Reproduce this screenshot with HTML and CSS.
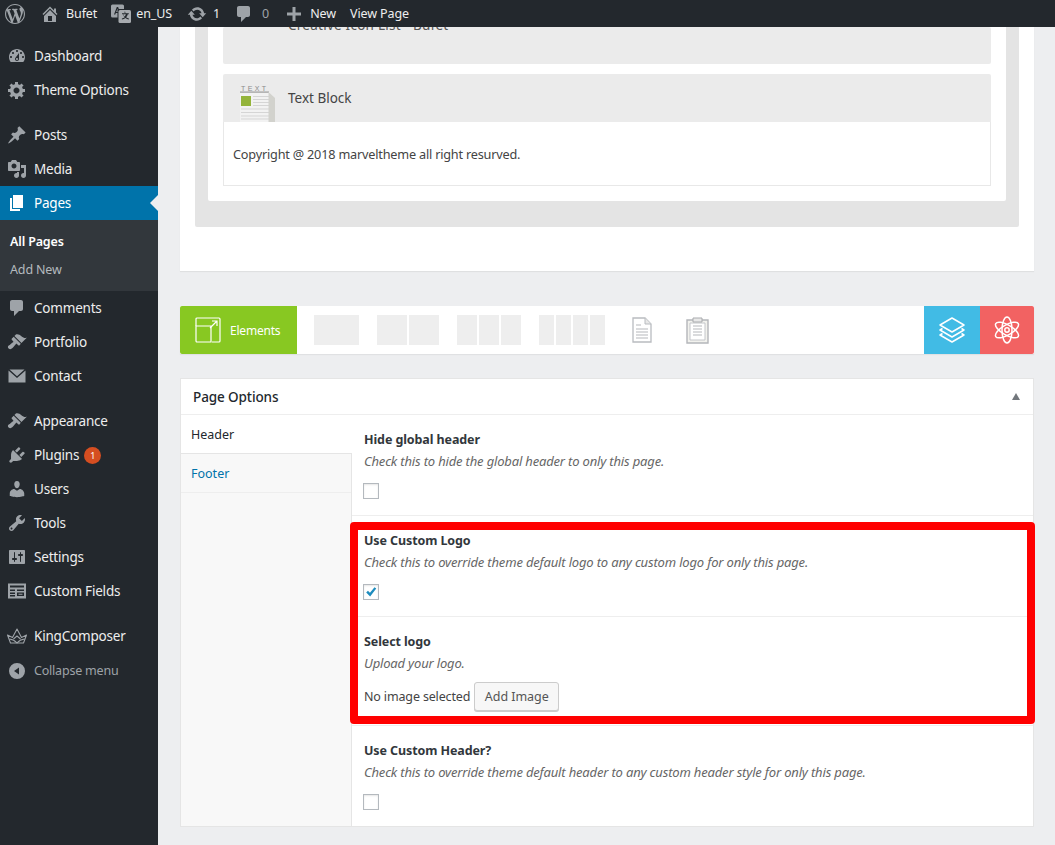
FILE: index.html
```html
<!DOCTYPE html>
<html lang="en">
<head>
<meta charset="utf-8">
<title>Edit Page</title>
<link rel="stylesheet" href="styles.css">
</head>
<body>
<svg class="defs" width="0" height="0" aria-hidden="true">
  <symbol id="i-wp" viewBox="0 0 20 20"><path fill-rule="evenodd" d="M20 10c0-5.51-4.49-10-10-10C4.48 0 0 4.49 0 10c0 5.52 4.48 10 10 10 5.51 0 10-4.48 10-10zM7.78 15.37L4.37 6.22c.55-.02 1.17-.08 1.17-.08.5-.06.44-1.13-.06-1.11 0 0-1.45.11-2.37.11-.18 0-.37 0-.58-.01C4.12 2.69 6.87 1.11 10 1.11c2.33 0 4.45.87 6.05 2.34-.68-.11-1.65.39-1.65 1.58 0 .74.45 1.36.9 2.1.35.61.55 1.36.55 2.46 0 1.49-1.4 5-1.4 5l-3.03-8.37c.54-.02.82-.17.82-.17.5-.05.44-1.25-.06-1.22 0 0-1.44.12-2.38.12-.87 0-2.33-.12-2.33-.12-.5-.03-.56 1.2-.06 1.22l.92.08 1.26 3.41zM17.41 10c.24-.64.74-1.87.43-4.25.7 1.29 1.05 2.71 1.05 4.25 0 3.29-1.73 6.24-4.4 7.78.97-2.59 1.94-5.2 2.92-7.78zM6.1 18.09C3.12 16.65 1.11 13.53 1.11 10c0-1.3.23-2.48.72-3.59C3.25 10.3 4.67 14.2 6.1 18.09zm4.03-6.63l2.58 6.98c-.86.29-1.76.45-2.71.45-.79 0-1.57-.11-2.29-.33.81-2.38 1.62-4.74 2.42-7.1z"/></symbol>
  <symbol id="i-home" viewBox="0 0 20 20"><path fill-rule="evenodd" d="M16 8.5l1.53 1.53-1.06 1.06L10 4.62l-6.47 6.47-1.06-1.06L10 2.5l4 4v-2h2v4zm-6-2.46l6 5.99V18H4v-5.97zM12 17v-5H8v5h4z"/></symbol>
  <symbol id="i-update" viewBox="0 0 20 20"><path d="M10.2 3.28c3.53 0 6.43 2.61 6.92 6h2.08l-3.5 4-3.5-4h2.32c-.45-1.97-2.21-3.45-4.32-3.45-1.45 0-2.73.71-3.54 1.78L4.95 5.66C6.23 4.2 8.11 3.28 10.2 3.28zm-.4 13.44c-3.52 0-6.43-2.61-6.92-6H.8l3.5-4c1.17 1.33 2.33 2.67 3.5 4H5.48c.45 1.97 2.21 3.45 4.32 3.45 1.45 0 2.73-.71 3.54-1.78l1.71 1.95c-1.28 1.46-3.15 2.38-5.25 2.38z"/></symbol>
  <symbol id="i-comment" viewBox="0 0 20 20"><path d="M5 2h9c1.1 0 2 .9 2 2v7c0 1.1-.9 2-2 2h-2l-5 5v-5H5c-1.1 0-2-.9-2-2V4c0-1.1.9-2 2-2z"/></symbol>
  <symbol id="i-plus" viewBox="0 0 20 20"><path d="M17 8.500v3h-5.500V17h-3v-5.500H3v-3h5.500V3h3v5.500z"/></symbol>
  <symbol id="i-dash" viewBox="0 0 20 20"><path fill-rule="evenodd" d="M3.76 16h12.48c1.1-1.37 1.76-3.11 1.76-5 0-4.42-3.58-8-8-8s-8 3.58-8 8c0 1.89.66 3.63 1.76 5zM10 4c.55 0 1 .45 1 1s-.45 1-1 1-1-.45-1-1 .45-1 1-1zM6 6c.55 0 1 .45 1 1s-.45 1-1 1-1-.45-1-1 .45-1 1-1zm8 0c.55 0 1 .45 1 1s-.45 1-1 1-1-.45-1-1 .45-1 1-1zm-5.37 5.55L12 7v6c0 1.1-.9 2-2 2s-2-.9-2-2c0-.57.24-1.08.63-1.45zM4 10c.55 0 1 .45 1 1s-.45 1-1 1-1-.45-1-1 .45-1 1-1zm12 0c.55 0 1 .45 1 1s-.45 1-1 1-1-.45-1-1 .45-1 1-1zm-5 3c0-.55-.45-1-1-1s-1 .45-1 1 .45 1 1 1 1-.45 1-1z"/></symbol>
  <symbol id="i-gear" viewBox="0 0 20 20"><path fill-rule="evenodd" d="M18 12h-2.18c-.17.7-.44 1.35-.81 1.93l1.54 1.54-2.1 2.1-1.54-1.54c-.58.36-1.23.63-1.91.79V19H8v-2.18c-.68-.16-1.33-.43-1.91-.79l-1.54 1.54-2.12-2.12 1.54-1.54c-.36-.58-.63-1.23-.79-1.91H1V9.03h2.17c.16-.7.44-1.35.8-1.94L2.43 5.55l2.1-2.1 1.54 1.54c.58-.37 1.24-.64 1.93-.81V2h3v2.18c.68.16 1.33.43 1.91.79l1.54-1.54 2.12 2.12-1.54 1.54c.36.59.64 1.24.8 1.94H18V12zm-8.5 1.5c1.66 0 3-1.34 3-3s-1.34-3-3-3-3 1.34-3 3 1.34 3 3 3z"/></symbol>
  <symbol id="i-pin" viewBox="0 0 20 20"><path d="M10.44 3.02l1.82-1.82 6.36 6.35-1.83 1.82c-1.05-.68-2.48-.57-3.41.36l-.75.75c-.92.93-1.04 2.35-.35 3.41l-1.83 1.82-2.41-2.41-2.8 2.79c-.42.42-3.38 2.71-3.8 2.29s1.86-3.39 2.28-3.81l2.79-2.79L4.1 9.36l1.83-1.82c1.05.69 2.48.57 3.4-.36l.75-.75c.93-.92 1.05-2.35.36-3.41z"/></symbol>
  <symbol id="i-media" viewBox="0 0 20 20"><path fill-rule="evenodd" d="M13 11V4c0-.55-.45-1-1-1h-1.67L9 1H5L3.67 3H2c-.55 0-1 .45-1 1v7c0 .55.45 1 1 1h10c.55 0 1-.45 1-1zM7 4.5c1.38 0 2.5 1.12 2.5 2.5S8.38 9.5 7 9.5 4.5 8.38 4.5 7 5.62 4.5 7 4.5zM14 6h5v10.5c0 1.38-1.12 2.5-2.5 2.5S14 17.88 14 16.5s1.12-2.5 2.5-2.5c.17 0 .34.02.5.05V9h-3V6zm-4 8.05V13h2v3.5c0 1.38-1.12 2.5-2.5 2.5S7 17.88 7 16.5 8.12 14 9.5 14c.17 0 .34.02.5.05z"/></symbol>
  <symbol id="i-page" viewBox="0 0 20 20"><path d="M6 15V2h10v13H6zm-1 1h8v2H3V5h2v11z"/></symbol>
  <symbol id="i-brush" viewBox="0 0 20 20"><path d="M14.48 11.06L7.41 3.99l1.5-1.5c.5-.56 2.3-.47 3.51.32 1.21.8 1.43 1.28 2.91 2.1 1.18.64 2.45 1.26 4.45.85zm-.71.71L6.7 4.7 4.93 6.47c-.39.39-.39 1.02 0 1.41l1.06 1.06c.39.39.39 1.03 0 1.42-.6.6-1.43 1.11-2.21 1.69-.35.26-.7.53-1.01.84C1.43 13.23-.03 14.85 1.62 16.5s3.27.19 4.61-1.15c.31-.31.58-.66.84-1.01.58-.78 1.09-1.61 1.69-2.21.39-.39 1.03-.39 1.42 0l1.06 1.06c.39.39 1.02.39 1.41 0z"/></symbol>
  <symbol id="i-mail" viewBox="0 0 20 20"><path d="M2.500 3.500h15L10 10.200zM1.500 4.500l8.500 7.500 8.500-7.500v12h-17z"/></symbol>
  <symbol id="i-plug" viewBox="0 0 20 20"><path d="M13.11 4.36L9.87 7.6 8 5.73l3.24-3.24c.35-.34 1.05-.2 1.56.32.52.51.66 1.21.31 1.55zm-8 1.77l.91-1.12 9.01 9.01-1.19.84c-.71.71-2.63 1.16-3.82 1.16H6.14L4.9 17.26c-.59.59-1.54.59-2.12 0-.59-.58-.59-1.53 0-2.12l1.24-1.24v-3.88c0-1.13.4-3.19 1.09-3.89zm7.26 3.97l3.24-3.24c.34-.35 1.04-.21 1.55.31.52.51.66 1.21.31 1.55l-3.24 3.25z"/></symbol>
  <symbol id="i-user" viewBox="0 0 20 20"><path d="M10 9.25c-2.27 0-2.73-3.44-2.73-3.44C7 4.02 7.82 2 9.97 2c2.16 0 2.98 2.02 2.71 3.81 0 0-.41 3.44-2.68 3.44zm0 2.57L12.72 10c2.39 0 4.52 2.33 4.52 4.53v2.49s-3.65 1.13-7.24 1.13c-3.65 0-7.24-1.13-7.24-1.13v-2.49c0-2.25 1.94-4.48 4.47-4.48z"/></symbol>
  <symbol id="i-tools" viewBox="0 0 20 20"><path fill-rule="evenodd" d="M16.68 9.77c-1.34 1.34-3.3 1.67-4.95.99l-5.41 6.52c-.99.99-2.59.99-3.58 0s-.99-2.59 0-3.57l6.52-5.42c-.68-1.65-.35-3.61.99-4.95 1.28-1.28 3.12-1.62 4.72-1.06l-2.89 2.89 2.82 2.82 2.86-2.87c.53 1.58.18 3.39-1.08 4.65zM3.81 16.21c.4.39 1.04.39 1.43 0 .4-.4.4-1.04 0-1.43-.39-.4-1.03-.4-1.43 0-.39.39-.39 1.03 0 1.43z"/></symbol>
  <symbol id="i-settings" viewBox="0 0 20 20"><path fill-rule="evenodd" d="M18 16V4c0-.55-.45-1-1-1H3c-.55 0-1 .45-1 1v12c0 .55.45 1 1 1h14c.55 0 1-.45 1-1zM8 11h1c.55 0 1 .45 1 1s-.45 1-1 1H8v1.5c0 .28-.22.5-.5.5s-.5-.22-.5-.5V13H6c-.55 0-1-.45-1-1s.45-1 1-1h1V5.5c0-.28.22-.5.5-.5s.5.22.5.5V11zm5-2h-1c-.55 0-1-.45-1-1s.45-1 1-1h1V5.500c0-.28.22-.5.5-.5s.5.22.5.5V7h1c.55 0 1 .45 1 1s-.45 1-1 1h-1v5.500c0 .28-.22.5-.5.5s-.5-.22-.5-.5V9z"/></symbol>
  <symbol id="i-fields" viewBox="0 0 20 20"><path fill-rule="evenodd" d="M1 2.500h18v15H1zM3 4.500v2h14v-2zM3 8.500v1.500h5V8.500zm7 0v1.500h7V8.500zM3 11.500V13h5v-1.500zm7 0v3.500h7v-3.500zm1.500 1.200h4v1.100h-4zM3 14v1.500h5V14z"/></symbol>
  <symbol id="i-crown" viewBox="0 0 20 20"><g fill="none" stroke="currentColor" stroke-width="1.100" stroke-linejoin="round"><path d="M.5 9l5 2.500L10 3l4.500 8.500 5-2.500-3 8h-13z"/><path d="M2.500 13c3.200.4 5.500 1.700 7.500 4 2-2.300 4.300-3.600 7.500-4M6.500 13l3.500-3 3.500 3"/></g></symbol>
  <symbol id="i-collapse" viewBox="0 0 20 20"><path fill-rule="evenodd" d="M10 2a8 8 0 1 1 0 16 8 8 0 0 1 0-16zm2 4.500L7 10l5 3.500z"/></symbol>
</svg>

<header class="adminbar">
  <svg class="bar-ico logo"><use href="#i-wp"/></svg>
  <a class="bar-item"><svg class="bar-ico"><use href="#i-home"/></svg><span class="bar-text">Bufet</span></a>
  <a class="bar-item lang">
    <svg class="bar-ico" viewBox="0 0 20 20"><rect x="0" y=".5" width="13" height="13" rx="1.500" fill="#9ea3a8"/><path d="M3 10.500L5.800 3h1.300l2.700 7.500H8.500L8 9H4.800l-.5 1.500zM5.200 7.900h2.400L6.400 4.700z" fill="#23282d"/><rect x="6.500" y="5" width="14" height="14" rx="1.500" fill="#23282d"/><rect x="7.500" y="6" width="12.500" height="13" rx="1.500" fill="#a7abaf"/><path d="M13.200 7.700h1.100v1.500h3.500v1h-1c-.3 1.300-.9 2.300-1.700 3.100.8.600 1.700 1 2.800 1.200v1c-1.400-.3-2.500-.8-3.500-1.500-.9.700-2 1.200-3.500 1.500v-1c1.100-.2 2-.6 2.800-1.200-.8-.8-1.400-1.800-1.700-3.100h-1v-1h3zm-.9 2.500c.3.900.7 1.700 1.300 2.400.6-.7 1-1.500 1.300-2.400z" fill="#23282d"/></svg>
    <span class="bar-text">en_US</span>
  </a>
  <a class="bar-item"><svg class="bar-ico"><use href="#i-update"/></svg><span class="bar-text">1</span></a>
  <a class="bar-item comments"><svg class="bar-ico"><use href="#i-comment"/></svg><span class="bar-text dim">0</span></a>
  <a class="bar-item"><svg class="bar-ico"><use href="#i-plus"/></svg><span class="bar-text">New</span></a>
  <a class="bar-item"><span class="bar-text">View Page</span></a>
</header>

<div class="layout">
  <nav class="sidebar">
    <ul class="menu">
      <li class="menu-item"><svg class="menu-ico"><use href="#i-dash"/></svg>Dashboard</li>
      <li class="menu-item"><svg class="menu-ico"><use href="#i-gear"/></svg>Theme Options</li>
      <li class="menu-item sep"><svg class="menu-ico"><use href="#i-pin"/></svg>Posts</li>
      <li class="menu-item"><svg class="menu-ico"><use href="#i-media"/></svg>Media</li>
      <li class="menu-item active"><svg class="menu-ico"><use href="#i-page"/></svg>Pages</li>
      <li class="submenu">
        <a class="sub-item current">All Pages</a>
        <a class="sub-item">Add New</a>
      </li>
      <li class="menu-item"><svg class="menu-ico"><use href="#i-comment"/></svg>Comments</li>
      <li class="menu-item"><svg class="menu-ico"><use href="#i-brush"/></svg>Portfolio</li>
      <li class="menu-item"><svg class="menu-ico"><use href="#i-mail"/></svg>Contact</li>
      <li class="menu-item sep"><svg class="menu-ico"><use href="#i-brush"/></svg>Appearance</li>
      <li class="menu-item"><svg class="menu-ico"><use href="#i-plug"/></svg>Plugins<span class="badge">1</span></li>
      <li class="menu-item"><svg class="menu-ico"><use href="#i-user"/></svg>Users</li>
      <li class="menu-item"><svg class="menu-ico"><use href="#i-tools"/></svg>Tools</li>
      <li class="menu-item"><svg class="menu-ico"><use href="#i-settings"/></svg>Settings</li>
      <li class="menu-item"><svg class="menu-ico"><use href="#i-fields"/></svg>Custom Fields</li>
      <li class="menu-item sep"><svg class="menu-ico"><use href="#i-crown"/></svg>KingComposer</li>
      <li class="menu-item collapse"><svg class="menu-ico"><use href="#i-collapse"/></svg>Collapse menu</li>
    </ul>
  </nav>

  <main class="content">
    <section class="builder">
      <div class="row-outer">
        <div class="row-inner">
          <div class="element clipped"><span class="clipped-title">Creative Icon List - Bufet</span></div>
          <div class="element">
            <div class="element-head">
              <svg class="text-ico" viewBox="0 0 36 38">
                <text x="1" y="6.800" class="text-ico-label">TEXT</text>
                <path d="M0 8h30v30H0z" fill="#f2f2f2"/>
                <path d="M0 7.500h29v1.200H0z" fill="#9b9b9b"/>
                <path d="M1 12h10v10H1z" fill="#94b43b"/>
                <path d="M13 12.500h16M13 15.500h16M13 18.500h16M13 21.500h16M1 25h28M1 28.500h28M1 32h28M1 35h28" stroke="#d5d5d5" fill="none"/>
                <path d="M28.500 8l6.500 6v24h-6.500z" fill="#d2d2cd"/>
              </svg>
              <span class="element-title">Text Block</span>
            </div>
            <div class="element-body">Copyright @ 2018 marveltheme all right resurved.</div>
          </div>
        </div>
      </div>
    </section>

    <section class="toolbar">
      <a class="tool-main">
        <svg class="tool-main-ico" viewBox="0 0 26 26" fill="none" stroke="#fff" stroke-width="1.200">
          <path d="M1 9V2a1 1 0 0 1 1-1h22a1 1 0 0 1 1 1v22a1 1 0 0 1-1 1H17"/>
          <path d="M1 9h15v16H2a1 1 0 0 1-1-1z"/>
          <path d="M15 11l7-7M17 4h5v5"/>
        </svg>
        <span class="tool-main-text">Elements</span>
      </a>
      <div class="col-groups">
        <div class="col-group w1"><i></i></div>
        <div class="col-group w2"><i></i><i></i></div>
        <div class="col-group w3"><i></i><i></i><i></i></div>
        <div class="col-group w4"><i></i><i></i><i></i><i></i></div>
        <svg class="tpl-ico doc" viewBox="0 0 20 26"><path d="M1 1h12l6 6v18H1z" fill="#fff" stroke="#b9bcc0" stroke-width="1.300"/><path d="M13 1v6h6" fill="#e8e8e8" stroke="#b9bcc0"/><path d="M4 8h5M4 12h12M4 15h12M4 18h12M4 21h12" stroke="#b5b8bb" stroke-width="1.200"/></svg>
        <svg class="tpl-ico clip" viewBox="0 0 23 27"><path d="M1 3h21v23H1z" fill="#f2f2ee" stroke="#b4b6ba" stroke-width="1.400"/><path d="M4 6h15v17H4z" fill="#fff" stroke="#c4c6ca"/><path d="M7 1h9v4H7z" fill="#e8e8e8" stroke="#a9abae"/><path d="M7 9h9M7 12h9M7 15h9M7 18h9" stroke="#b5b8bb" stroke-width="1.200"/></svg>
      </div>
      <a class="tool-side blue">
        <svg viewBox="0 0 28 28" fill="none" stroke="#fff" stroke-width="1.500" stroke-linejoin="round" class="tool-side-ico"><path d="M14 2l12 7-12 7-12-7z"/><path d="M4.500 12.500L2 14l12 7 12-7-2.500-1.500"/><path d="M4.500 17.500L2 19l12 7 12-7-2.500-1.500"/></svg>
      </a>
      <a class="tool-side red">
        <svg viewBox="0 0 28 28" fill="none" stroke="#fff" stroke-width="1.500" class="tool-side-ico"><ellipse cx="14" cy="14" rx="5" ry="13"/><ellipse cx="14" cy="14" rx="5" ry="13" transform="rotate(60 14 14)"/><ellipse cx="14" cy="14" rx="5" ry="13" transform="rotate(-60 14 14)"/><circle cx="14" cy="14" r="2.200"/></svg>
      </a>
    </section>

    <section class="options">
      <header class="options-head"><h2>Page Options</h2><span class="caret"></span></header>
      <div class="options-body">
        <ul class="tabs">
          <li class="tab on">Header</li>
          <li class="tab">Footer</li>
        </ul>
        <div class="fields">
          <div class="field">
            <div class="field-label">Hide global header</div>
            <div class="field-desc">Check this to hide the global header to only this page.</div>
            <span class="check"></span>
          </div>
          <div class="field">
            <div class="field-label">Use Custom Logo</div>
            <div class="field-desc">Check this to override theme default logo to any custom logo for only this page.</div>
            <span class="check"><svg viewBox="0 0 16 16" class="tick"><path d="M2.500 8.500l2-2 2.300 2.400L12 2.500l2 1.500-7 9z"/></svg></span>
          </div>
          <div class="field tight">
            <div class="field-label">Select logo</div>
            <div class="field-desc">Upload your logo.</div>
            <div class="upload"><span>No image selected</span><button class="btn" type="button">Add Image</button></div>
          </div>
          <div class="field last">
            <div class="field-label">Use Custom Header?</div>
            <div class="field-desc">Check this to override theme default header to any custom header style for only this page.</div>
            <span class="check"></span>
          </div>
        </div>
      </div>
      <div class="highlight"></div>
    </section>
  </main>
</div>
</body>
</html>
```
FILE: styles.css
```css
* { box-sizing: border-box; }
html, body { margin: 0; padding: 0; }
body {
  background: #edeef0;
  color: #444;
  font-family: "Noto Sans", "Open Sans", sans-serif;
  font-size: 13px;
  line-height: 20px;
  overflow: hidden;
  height: 845px;
}
.defs { position: absolute; }
ul { list-style: none; margin: 0; padding: 0; }

/* admin bar */
.adminbar {
  display: flex;
  align-items: center;
  height: 27px;
  background: #23282d;
  color: #eee;
  padding-left: 5px;
}
.bar-ico { width: 20px; height: 20px; fill: #9ea3a8; flex: none; }
.logo { margin-right: 15px; }
.bar-item { display: flex; align-items: center; gap: 6px; margin-right: 14px; }
.bar-item.lang { gap: 5px; margin-right: 15px; }
.bar-item.comments { gap: 8px; margin-right: 15px; }
.bar-text { font-size: 12.500px; letter-spacing: -0.1px; white-space: nowrap; }
.dim { color: #9ea3a8; }

/* sidebar */
.layout { display: flex; height: 818px; }
.sidebar { width: 158px; flex: none; background: #23282d; padding-top: 12px; }
.menu-item {
  position: relative;
  display: flex;
  align-items: center;
  height: 34px;
  padding-left: 7px;
  color: #eee;
  font-size: 13.500px;
  letter-spacing: -0.2px;
}
.menu-item.sep { margin-top: 11px; }
.menu-ico { width: 20px; height: 20px; margin-right: 7px; fill: #9ea3a8; color: #9ea3a8; flex: none; }
.active { background: #0073aa; color: #fff; }
.active .menu-ico { fill: #fff; }
.active::after {
  content: "";
  position: absolute;
  right: 0;
  top: 50%;
  margin-top: -8px;
  border: 8px solid transparent;
  border-right-color: #edeef0;
  border-left-width: 0;
}
.submenu { background: #32373c; padding: 8px 0 7px; height: 71px; }
.sub-item { display: block; height: 28px; line-height: 28px; padding-left: 10px; font-size: 12.500px; letter-spacing: -0.15px; color: #b4b9be; }
.sub-item.current { color: #fff; font-weight: 600; }
.badge {
  width: 17px; height: 17px; border-radius: 50%;
  background: #d54e21; color: #fff; font-size: 9px; line-height: 17px;
  text-align: center; margin-left: 5px; letter-spacing: 0;
}
.collapse { color: #9ea3a8; font-size: 12.500px; padding-top: 1px; }

/* content */
.content { flex: 1; min-width: 0; padding: 0 21px 0 22px; }
.builder { background: #fff; padding: 0 15px 44px; box-shadow: 0 1px 1px rgba(0,0,0,.06); }
.row-outer { background: #e4e4e4; padding: 0 13px 26px; border-radius: 0 0 2px 2px; }
.row-inner { background: #fff; padding: 0 15px 15px; display: flex; flex-direction: column; gap: 10px; border-radius: 0 0 2px 2px; }
.element { border-radius: 2px; }
.clipped { height: 37px; background: #ebebeb; overflow: hidden; padding-left: 65px; }
.clipped-title { display: block; margin-top: -12px; font-size: 13.500px; letter-spacing: .25px; color: #555; }
.element-head { display: flex; align-items: center; height: 48px; background: #ebebeb; padding: 9px 0 0 17px; border-radius: 2px 2px 0 0; }
.text-ico { width: 36px; height: 38px; margin-top: -1px; margin-right: 12px; flex: none; align-self: flex-end; }
.text-ico-label { font-size: 7px; letter-spacing: 2.400px; fill: #8a8a8a; font-family: "Liberation Sans", sans-serif; }
.element-title { font-size: 13.500px; color: #444; margin-top: -9px; }
.element-body { height: 64px; background: #fff; border: 1px solid #e8e8e8; border-top: 0; padding: 22px 9px 0; font-size: 12.700px; letter-spacing: -0.2px; color: #444; }

/* toolbar */
.toolbar { display: flex; height: 48px; margin-top: 35px; background: #fff; box-shadow: 0 1px 1px rgba(0,0,0,.05); }
.tool-main {
  width: 117px; flex: none; background: #88c822; color: #fff;
  display: flex; align-items: center; padding-left: 15px; gap: 9px;
  font-size: 12px; letter-spacing: -0.2px; border-radius: 2px 0 0 2px;
}
.tool-main-ico { width: 26px; height: 26px; flex: none; }
.tool-main-text { padding-top: 1px; }
.col-groups { flex: 1; display: flex; align-items: center; gap: 18px; padding-left: 17px; }
.col-group { display: flex; gap: 2px; height: 30px; }
.col-group i { flex: 1; background: #eee; }
.w1 { width: 45px; } .w2 { width: 62px; } .w3 { width: 64px; } .w4 { width: 66px; }
.tpl-ico { flex: none; }
.doc { width: 20px; height: 26px; margin-left: 9px; }
.clip { width: 23px; height: 27px; margin-left: 16px; }
.tool-side { width: 56px; flex: none; display: flex; align-items: center; justify-content: center; }
.tool-side.red { width: 54px; border-radius: 0 2px 2px 0; }
.blue { background: #41bbe5; }
.red { background: #f26262; }
.tool-side-ico { width: 28px; height: 28px; }

/* options */
.options { position: relative; margin-top: 24px; background: #fff; border: 1px solid #e5e5e5; }
.options-head { display: flex; align-items: center; justify-content: space-between; height: 36px; padding: 0 13px 0 12px; border-bottom: 1px solid #eee; }
.options-head h2 { margin: 0; font-size: 13.500px; font-weight: 500; color: #23282d; letter-spacing: -0.1px; }
.caret { border: 5px solid transparent; border-top: 0; border-bottom: 7px solid #72777c; border-left-width: 4px; border-right-width: 4px; }
.options-body { display: flex; }
.tabs { width: 171px; flex: none; background: #f8f8f8; border-right: 1px solid #e5e5e5; }
.tab { height: 39px; padding: 10px 0 0 10px; font-size: 12.500px; color: #0073aa; border-bottom: 1px solid #eee; }
.tab.on { margin-right: -1px; background: #fff; color: #23282d; border-bottom-color: #e5e5e5; }
.fields { flex: 1; min-width: 0; }
.field { padding: 15px 12px 16px; border-bottom: 1px solid #eee; }
.field.tight { padding-bottom: 14px; }
.field.last { padding-bottom: 16px; border-bottom: 0; }
.field-label { font-weight: 700; font-size: 12.500px; letter-spacing: -0.1px; color: #32373c; }
.field-desc { margin-top: 1px; font-style: italic; font-size: 13px; letter-spacing: -0.17px; color: #666; }
.check { display: block; width: 16px; height: 16px; margin: 12px 0 0 -1px; background: #fff; border: 1px solid #b4b9be; box-shadow: inset 0 1px 2px rgba(0,0,0,.1); }
.tick { display: block; width: 14px; height: 14px; fill: #1e8cbe; }
.upload { display: flex; align-items: center; gap: 4px; margin-top: 9px; font-size: 12.500px; letter-spacing: -0.15px; }
.btn {
  height: 29px; width: 85px; padding: 0;
  font: inherit; letter-spacing: -0.05px; color: #555;
  background: #f7f7f7; border: 1px solid #ccc; border-radius: 3px;
  box-shadow: 0 1px 0 #ccc;
}
.highlight {
  position: absolute;
  left: 169px; top: 143px;
  width: 685px; height: 202px;
  border: 8px solid #f00;
  border-radius: 4px;
  pointer-events: none;
}
```
